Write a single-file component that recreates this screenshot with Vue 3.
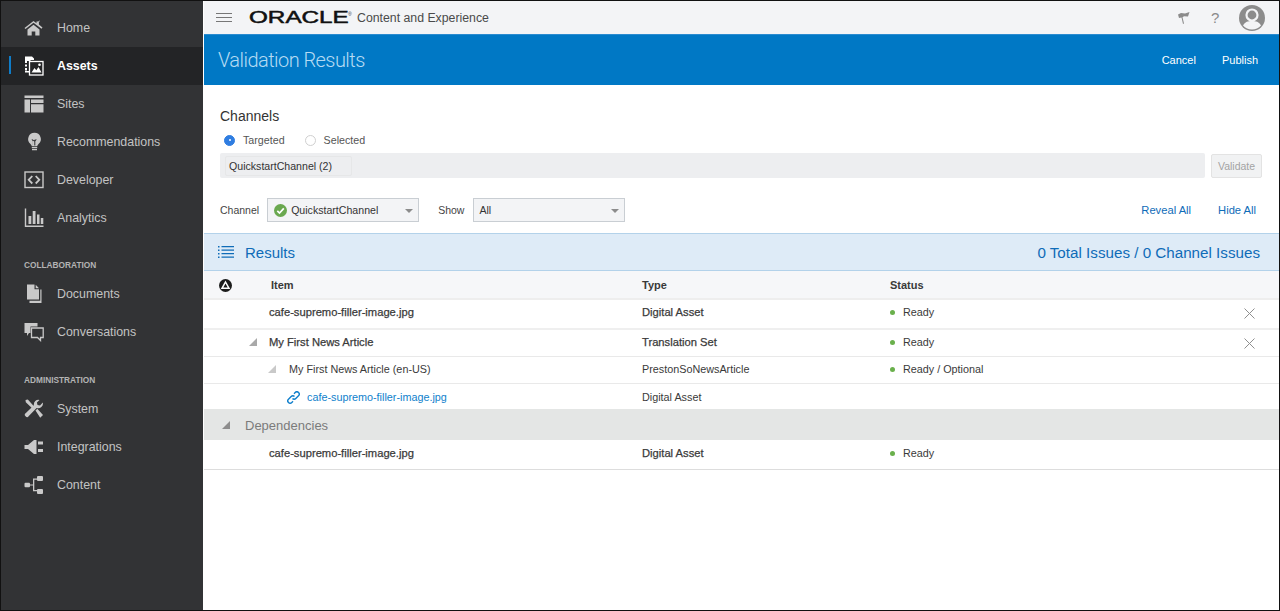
<script setup>
const groups = [
  { title: '', items: [
    { label: 'Home', icon: 'home' },
    { label: 'Assets', icon: 'assets', active: true },
    { label: 'Sites', icon: 'sites' },
    { label: 'Recommendations', icon: 'bulb' },
    { label: 'Developer', icon: 'dev' },
    { label: 'Analytics', icon: 'chart' },
  ] },
  { title: 'COLLABORATION', items: [
    { label: 'Documents', icon: 'docs' },
    { label: 'Conversations', icon: 'chat' },
  ] },
  { title: 'ADMINISTRATION', items: [
    { label: 'System', icon: 'tools' },
    { label: 'Integrations', icon: 'plug' },
    { label: 'Content', icon: 'tree' },
  ] },
]
</script>

<template>
  <div class="frame">
    <aside class="sidebar">
      <div v-for="g in groups" :key="g.title" class="group" :class="{ titled: g.title }">
        <div v-if="g.title" class="group-title">{{ g.title }}</div>
        <div v-for="n in g.items" :key="n.label" class="nav" :class="{ active: n.active }">
          <span class="nav-icon">
            <svg width="20" height="20" viewBox="0 0 20 20" fill="currentColor">
              <template v-if="n.icon === 'home'">
                <path d="M.5 10 9.5 3l3 2.3V3.600h1.800l1-1.200.6.6-1 1.100v2.500l3.600 3-1 1.100L9.500 4.800 1.500 11.100z" />
                <path d="M3.500 11.500 9.500 6.700l6 4.800v6h-4.200v-4H7.700v4H3.500z" />
              </template>
              <template v-else-if="n.icon === 'assets'">
                <path d="M1 .5h7l2 2v1.500H6.500v1H3v2H1zM1 8.500h2v2H1zM1 12h2v2.500H1zM4 15h1.800v1.500H1V15z" />
                <rect x="5.500" y="5.500" width="13.500" height="13.500" fill="none" stroke="currentColor" stroke-width="1.300" />
                <path d="M7.500 16.500 10.500 12l1.800 2.200 2.200-3.200 3 5.500z" />
                <circle cx="15.500" cy="8.800" r="1.300" />
              </template>
              <template v-else-if="n.icon === 'sites'">
                <path d="M.5 1.500h19v2.500H.5zM.5 5.500h5.500v13H.5zM7 5.500h12.500V9H7zM7 10.200h12.500v8.300H7z" />
              </template>
              <template v-else-if="n.icon === 'bulb'">
                <path d="M10.500.8a6.300 6.300 0 0 0-4 11.200c.8.800 1.200 1.500 1.300 2.200h5.400c.1-.7.500-1.400 1.300-2.200A6.300 6.300 0 0 0 10.500.8zM8.900 13.500V9.300L7.500 7.600l1-.4.900 1.100.7-.8.700.8.900-1.100 1 .4-1.400 1.700v4.200h-1V9.600l-.700-.8-.600.8v3.900z" fill-rule="evenodd" />
                <path d="M7.800 15h5.400v1.200H7.800zM8 17h5v1.200H8z" />
              </template>
              <template v-else-if="n.icon === 'dev'">
                <rect x="1" y="2" width="18" height="15.500" fill="none" stroke="currentColor" stroke-width="1.400" />
                <path d="M8.300 6 4.700 9.800l3.600 3.700M11.700 6l3.600 3.800-3.600 3.700" fill="none" stroke="currentColor" stroke-width="1.800" />
              </template>
              <template v-else-if="n.icon === 'chart'">
                <path d="M.8.500h1.400V17.500h17.300v1.400H.8zM4.500 8h2.800v8H4.500zM8.700 3h2.800v13H8.700zM13 6.500h2.500V16H13zM16.800 10h2.500v6h-2.500z" />
              </template>
              <template v-else-if="n.icon === 'docs'">
                <path d="M3 .5h7.500v4.800h4.500V15.500H3zM11.700.8 15 4.200h-3.300z" />
                <path d="M16.300 5.500h1.200v13.500H5.500v-2.200h10.800z" />
              </template>
              <template v-else-if="n.icon === 'chat'">
                <path d="M.5 1h13v3.500H6.500v6.500H5l-2 3v-3H.5z" />
                <path d="M7.500 6h11.700v9.500h-2.700v3l-3-3H7.500z" fill="none" stroke="currentColor" stroke-width="1.300" />
              </template>
              <template v-else-if="n.icon === 'tools'">
                <path d="M1.500 1 3.800.5l5 5.500 1.300 1.200-2 2-1.300-1.300L1.800 3.300zM11.500 11.500l1.800-1.800 5.700 6.200-2.800 2.900z" />
                <path d="M18.800 3.500a4.700 4.700 0 0 1-6.200 5.500L4.800 17a2.100 2.100 0 1 1-2.900-2.900l8-7.800A4.700 4.700 0 0 1 15.500.9L12.900 3.500 13.500 6l2.500.6z" />
              </template>
              <template v-else-if="n.icon === 'plug'">
                <path d="M.5 8h3.500l6-5h2.500v14H10l-6-5H.5z" />
                <rect x="14" y="4.500" width="5" height="3" /><rect x="14" y="12" width="5" height="3" />
              </template>
              <template v-else>
                <rect x=".5" y="7.800" width="5.500" height="4.500" rx="1" />
                <path d="M6 9.400h3V3.500h4v1.300h-2.700v4.600h0v1.200h0V15H13v1.300H9v-5.700H6z" />
                <rect x="13" y="1" width="6" height="5" rx="1" /><rect x="13" y="14" width="6" height="5" rx="1" />
              </template>
            </svg>
          </span>
          <span>{{ n.label }}</span>
        </div>
      </div>
    </aside>

    <main class="main">
      <header class="topbar">
        <span class="burger"><i></i><i></i><i></i></span>
        <span class="logo">ORACLE</span><span class="reg">®</span>
        <span class="product">Content and Experience</span>
        <span class="top-right">
          <svg class="flag" width="14" height="16" viewBox="0 0 14 16" fill="#8b8b8b"><path d="M1 4.500 4 3l4 .5 4.500-1.500-1.500 4.500-4-.2-1.500.9L7 13.500 6 14 4.500 7.500 2 8z" /></svg>
          <span class="help">?</span>
          <svg width="26" height="26" viewBox="0 0 26 26"><circle cx="13" cy="13" r="13" fill="#8c8c8c" /><circle cx="13" cy="10" r="5.500" fill="none" stroke="#f3f4f6" stroke-width="2.200" /><path d="M4 20.500c2-3.700 5-4.500 9-4.500s7 .8 9 4.500A12 12 0 0 1 13 24.500 12 12 0 0 1 4 20.500z" fill="#f3f4f6" /></svg>
        </span>
      </header>

      <section class="band">
        <h1>Validation Results</h1>
        <div class="band-actions"><span>Cancel</span><span>Publish</span></div>
      </section>

      <section class="channels">
        <h2>Channels</h2>
        <div class="radios">
          <span class="radio on"></span><label>Targeted</label>
          <span class="radio"></span><label>Selected</label>
        </div>
        <div class="picker">
          <div class="input"><span class="chip">QuickstartChannel (2)</span></div>
          <button class="validate">Validate</button>
        </div>
        <div class="filters">
          <label>Channel</label>
          <div class="select first">
            <svg width="13" height="13" viewBox="0 0 13 13"><circle cx="6.500" cy="6.500" r="6.500" fill="#6aa84f" /><path d="M3.300 6.800 5.500 9l4.300-4.600" fill="none" stroke="#fff" stroke-width="1.700" /></svg>
            <span>QuickstartChannel</span><i class="caret"></i>
          </div>
          <label class="show">Show</label>
          <div class="select second"><span>All</span><i class="caret"></i></div>
          <span class="links"><a>Reveal All</a><a>Hide All</a></span>
        </div>
      </section>

      <section class="results-head">
        <svg width="16" height="15" viewBox="0 0 16 15" fill="#0f6cb8"><path d="M0 1h1.500v1.500H0zM3.500 1H16v1.300H3.500zM0 4.500h1.500V6H0zM3.500 4.500H16v1.300H3.500zM0 8h1.500v1.500H0zM3.500 8H16v1.300H3.500zM0 11.500h1.500V13H0zM3.500 11.500H16v1.300H3.500z" /></svg>
        <span class="r-title">Results</span>
        <span class="r-count">0 Total Issues / 0 Channel Issues</span>
      </section>

      <div class="row head">
        <span class="c-tog"><svg width="13" height="13" viewBox="0 0 13 13"><circle cx="6.500" cy="6.500" r="6.500" fill="#1c1c1c" /><path d="M6.500 3 10 9.300H3z" fill="none" stroke="#fff" stroke-width="1.500" /></svg></span>
        <span class="c-item head-item">Item</span>
        <span class="c-type">Type</span>
        <span class="c-status">Status</span>
      </div>

      <div class="row r1 strong">
        <span class="c-tog"></span><span class="c-item">cafe-supremo-filler-image.jpg</span>
        <span class="c-type">Digital Asset</span>
        <span class="c-status normal"><i class="dot"></i>Ready</span>
        <svg class="x" width="11" height="11" viewBox="0 0 11 11"><path d="M.5.500l10 10M10.500.500l-10 10" stroke="#8f8f8f" fill="none" /></svg>
      </div>
      <div class="row r2 strong">
        <span class="c-tog"></span>
        <span class="c-item"><i class="tri t1"></i>My First News Article</span>
        <span class="c-type">Translation Set</span>
        <span class="c-status normal"><i class="dot"></i>Ready</span>
        <svg class="x" width="11" height="11" viewBox="0 0 11 11"><path d="M.5.500l10 10M10.500.500l-10 10" stroke="#8f8f8f" fill="none" /></svg>
      </div>
      <div class="row r3">
        <span class="c-tog"></span>
        <span class="c-item ind1"><i class="tri t2"></i>My First News Article (en-US)</span>
        <span class="c-type">PrestonSoNewsArticle</span>
        <span class="c-status"><i class="dot"></i>Ready / Optional</span>
      </div>
      <div class="row r4">
        <span class="c-tog"></span>
        <span class="c-item ind2 link">
          <svg class="chain" width="13" height="13" viewBox="0 0 13 13" fill="none" stroke="#0f7fcc" stroke-width="1.400"><path d="M5.500 7.500a2.300 2.300 0 0 0 3.300 0l2.700-2.700a2.300 2.300 0 0 0-3.300-3.300L7 2.700M7.500 5.500a2.300 2.300 0 0 0-3.300 0L1.500 8.200a2.300 2.300 0 0 0 3.300 3.300L6 10.300" /></svg>cafe-supremo-filler-image.jpg
        </span>
        <span class="c-type">Digital Asset</span>
      </div>
      <div class="deps"><i class="tri t3"></i><span>Dependencies</span></div>
      <div class="row r5 strong">
        <span class="c-tog"></span><span class="c-item">cafe-supremo-filler-image.jpg</span>
        <span class="c-type">Digital Asset</span>
        <span class="c-status normal"><i class="dot"></i>Ready</span>
      </div>
    </main>
  </div>
</template>

<style>
html, body { margin: 0; background: #fff; }
</style>

<style scoped>
.frame {
  width: 1280px; height: 611px; box-sizing: border-box;
  border: 1px solid #111; display: flex; overflow: hidden;
  font-family: "Liberation Sans", Arial, sans-serif; color: #3a3a3a; font-size: 11.5px;
}
.sidebar { width: 202px; margin-right: 1px; flex: none; background: #323335; padding-top: 8px; color: #c3c3c3; font-size: 12.4px; }
.group.titled { padding-top: 21px; }
.group.titled + .group.titled { padding-top: 22px; }
.group-title { font-size: 8.3px; font-weight: 700; color: #b4b4b4; height: 17px; line-height: 15px; padding-left: 23px; }
.nav { height: 38px; display: flex; align-items: center; position: relative; }
.nav-icon { width: 56px; padding-left: 23px; box-sizing: border-box; display: flex; color: #c9c9c9; flex: none; }
.nav.active { background: #232426; color: #fff; font-weight: 700; }
.nav.active .nav-icon { color: #fff; }
.nav.active::before { content: ""; position: absolute; left: 8px; top: 9px; width: 2px; height: 18px; background: #0f7cc8; }

.main { flex: 1; min-width: 0; display: flex; flex-direction: column; }
.topbar { height: 33px; flex: none; background: #f3f4f6; display: flex; align-items: center; padding-left: 12px; }
.burger { width: 16px; display: flex; flex-direction: column; gap: 3px; margin-right: 17px; }
.burger i { height: 1px; background: #777; display: block; }
.logo { font-size: 16.5px; color: #111; -webkit-text-stroke: .5px #111; transform: scaleX(1.47); transform-origin: left; display: inline-block; width: 99px; }
.reg { font-size: 5px; color: #333; align-self: flex-start; margin-top: 10px; width: 4px; }
.product { font-size: 12.3px; color: #4a4a4a; margin-left: 5px; }
.top-right { margin-left: auto; display: flex; align-items: center; padding-right: 14px; }
.flag { margin-right: 20px; }
.help { font-size: 15px; color: #8a8a8a; margin-right: 19px; width: 9px; }

.band { height: 51px; flex: none; background: #0078c5; display: flex; align-items: center; justify-content: space-between; padding: 0 21px 0 14px; color: #fff; border-top: 1px solid #2a8bd0; box-sizing: border-box; }
.band h1 { margin: 0; font-family: Roboto, "Liberation Sans", sans-serif; font-size: 20px; letter-spacing: -.55px; font-weight: 300; color: #b5dbf3; }
.band-actions { display: flex; gap: 26px; font-size: 11px; }

.channels { padding: 23px 17px 0 16px; height: 148px; box-sizing: border-box; flex: none; }
.channels h2 { margin: 0; font-size: 14px; font-weight: 400; color: #333; line-height: 16px; }
.radios { display: flex; align-items: center; height: 16px; margin-top: 8px; padding-left: 4px; font-size: 10.7px; color: #555; }
.radio { width: 9px; height: 9px; border-radius: 50%; border: 1px solid #d0d0d0; background: #fff; margin-right: 8px; }
.radio.on { background: #2f7de1; border-color: #2f7de1; position: relative; }
.radio.on::after { content: ""; position: absolute; left: 3.5px; top: 3.5px; width: 2px; height: 2px; background: #fff; border-radius: 50%; }
.radios label { margin-right: 20px; }
.picker { display: flex; margin-top: 5px; gap: 6px; align-items: center; }
.input { flex: 1; height: 25px; background: #edeef0; border-radius: 2px; display: flex; align-items: center; padding-left: 5px; }
.chip { height: 20px; line-height: 18px; width: 127px; padding-left: 3px; border: 1px solid #e6e7e8; border-radius: 2px; font-size: 10.6px; color: #333; box-sizing: border-box; }
.validate { width: 51px; height: 24px; background: #f1f2f3; border: 1px solid #e3e3e3; color: #a3a3a3; font: 10.5px "Liberation Sans", Arial, sans-serif; padding: 0; border-radius: 2px; }
.filters { display: flex; align-items: center; margin-top: 20px; font-size: 10.5px; color: #444; }
.select { height: 24px; background: #f3f4f6; border: 1px solid #c9ced3; box-sizing: border-box; width: 152px; display: flex; align-items: center; position: relative; padding-left: 6px; gap: 4px; font-size: 10.6px; color: #333; margin-left: 8px; }
.select.second { padding-left: 5px; margin-left: 9px; }
.show { margin-left: 19px; }
.caret { position: absolute; right: 5px; top: 10px; border: 4px solid transparent; border-top: 4.5px solid #8c8c8c; border-bottom: 0; }
.links { margin-left: auto; display: flex; gap: 27px; padding-right: 6px; color: #0f6cb8; font-size: 11.2px; }

.results-head { height: 38px; flex: none; background: #deebf7; border-top: 1px solid #b3d2ea; border-bottom: 1px solid #b3d2ea; box-sizing: border-box; display: flex; align-items: center; padding: 0 19px 0 14px; color: #0f6cb8; }
.r-title { font-size: 15px; margin-left: 11px; }
.r-count { margin-left: auto; font-size: 15.2px; }

.row { display: flex; align-items: center; border-bottom: 1px solid #e9e9e9; box-sizing: border-box; flex: none; position: relative; font-size: 10.8px; color: #3a3a3a; }
.head { height: 29px; background: #f6f7f9; font-weight: 700; font-size: 11px; border-bottom: 2px solid #eee; padding-top: 1px; }
.r1 { height: 30px; border-bottom-width: 2px; border-color: #efefef; padding-bottom: 4px; }
.r2, .r3 { height: 27px; padding-bottom: 2px; }
.r4 { height: 25px; border-bottom: 0; padding-top: 1px; }
.r5 { height: 30px; border-color: #ddd; padding-bottom: 3px; }
.strong .c-item, .strong .c-type { font-size: 11.2px; -webkit-text-stroke: .25px #3a3a3a; }
.c-tog { width: 15px; margin-left: 15px; display: flex; flex: none; }
.c-item { width: 373px; margin-left: 35px; box-sizing: border-box; position: relative; flex: none; }
.head-item { padding-left: 2px; }
.ind1 { padding-left: 20px; }
.ind2 { padding-left: 38px; color: #0f7fcc; }
.c-type { width: 248px; flex: none; }
.c-status { display: flex; align-items: center; font-weight: 700; }
.c-status.normal, .r3 .c-status { font-weight: 400; }
.dot { width: 5px; height: 5px; border-radius: 50%; background: #6ab04c; margin-right: 8px; }
.x { position: absolute; right: 24px; top: 8px; }
.tri { position: absolute; width: 0; height: 0; border-style: solid; border-width: 0 0 8px 8px; border-color: transparent transparent #a9a9a9 transparent; }
.t1 { left: -20px; top: 2px; }
.t2 { left: -1px; top: 2px; border-color: transparent transparent #c9c9c9 transparent; }
.chain { position: absolute; left: 18px; top: 0; }
.deps { height: 31px; flex: none; background: #e4e6e5; display: flex; align-items: center; position: relative; padding: 2px 0 0 41px; box-sizing: border-box; font-size: 13px; color: #7b7b7b; }
.t3 { left: 18px; top: 12px; border-color: transparent transparent #8d8d8d transparent; }
</style>
